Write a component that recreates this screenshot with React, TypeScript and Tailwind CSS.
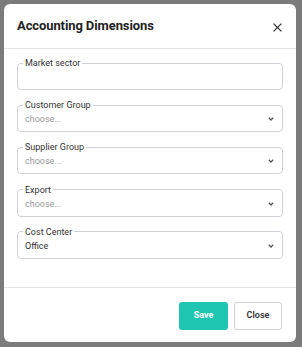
import React from 'react';

const fields = [
  { label: 'Market sector', value: '', select: false },
  { label: 'Customer Group', value: '', select: true },
  { label: 'Supplier Group', value: '', select: true },
  { label: 'Export', value: '', select: true },
  { label: 'Cost Center', value: 'Office', select: true },
];

const Chevron = () => (
  <svg width="6" height="4" viewBox="0 0 6 4" className="shrink-0">
    <path d="M0.8 0.8 L3 3 L5.2 0.8" fill="none" stroke="#555" strokeWidth="1.3" />
  </svg>
);

export default function App() {
  return (
    <div className="h-[347px] w-[302px] bg-[#7b7b7b] pt-[4px] pl-[4px] font-['Roboto',sans-serif]">
      <div className="w-[292px] h-[338px] bg-white rounded-[6px] flex flex-col">
        {/* Header */}
        <div className="h-[45px] shrink-0 flex items-center justify-between pl-[13px] pr-[14px] border-b border-[#e4e6ea]">
          <h2 className="text-[13px] font-bold text-[#222] tracking-[-0.1px] leading-[16px]">Accounting Dimensions</h2>
          <button className="pt-[2px]">
            <svg width="9" height="9" viewBox="0 0 9 9" className="block">
              <path d="M0.6 0.6 L8.4 8.4 M8.4 0.6 L0.6 8.4" stroke="#333" strokeWidth="1.3" />
            </svg>
          </button>
        </div>

        {/* Body */}
        <div className="flex-1 px-[13px] pt-[7px] flex flex-col gap-[8.2px]">
          {fields.map((f) => (
            <fieldset key={f.label} className="border border-[#cfd2d6] rounded-[4px] pl-[5px] pr-[8px] h-[34px] m-0 shrink-0">
              <legend className="text-[9px] leading-[14px] text-[#333] px-[2px]">{f.label}</legend>
              <div className="flex items-center justify-between h-[14px] pl-[2px]">
                <span className={`text-[9px] leading-[14px] ${f.value ? 'text-[#333]' : 'text-[#9a9a9a]'}`}>
                  {f.select ? (f.value || 'choose...') : ''}
                </span>
                {f.select && <Chevron />}
              </div>
            </fieldset>
          ))}
        </div>

        {/* Footer */}
        <div className="shrink-0 border-t border-[#e4e6ea] flex justify-end gap-[6px] pt-[14px] pb-[12px] pr-[14px]">
          <button className="w-[49px] h-[28px] rounded-[3px] bg-[#1ec6b2] text-white text-[9px] font-bold">Save</button>
          <button className="w-[48px] h-[28px] rounded-[3px] border border-[#cfd2d6] bg-white text-[#333] text-[9px] font-semibold">Close</button>
        </div>
      </div>
    </div>
  );
}
